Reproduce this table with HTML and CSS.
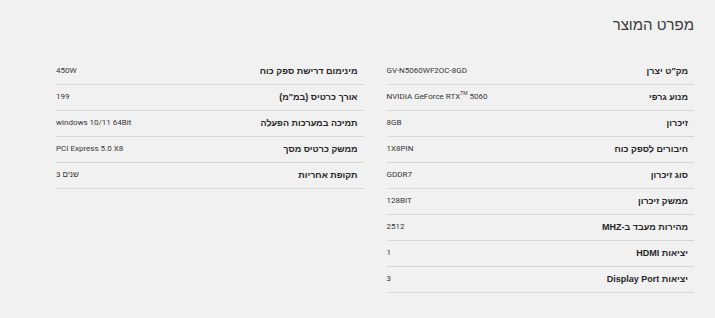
FILE: index.html
```html
<!DOCTYPE html>
<html lang="he" dir="rtl">
<head>
  <meta charset="UTF-8">
  <meta name="viewport" content="width=device-width, initial-scale=1.0">
  <title>מפרט המוצר</title>
  <link rel="stylesheet" href="styles.css">
</head>
<body>
  <section class="specs">
    <h2 class="specs-title">מפרט המוצר</h2>

    <div class="specs-grid">
      <ul class="spec-list">
        <li class="spec-row"><span class="spec-label">מק"ט יצרן</span><span class="spec-value">GV-N5060WF2OC-8GD</span></li>
        <li class="spec-row"><span class="spec-label">מנוע גרפי</span><span class="spec-value">NVIDIA GeForce RTX<sup>TM</sup> 5060</span></li>
        <li class="spec-row"><span class="spec-label">זיכרון</span><span class="spec-value">8GB</span></li>
        <li class="spec-row"><span class="spec-label">חיבורים לספק כוח</span><span class="spec-value">1X8PIN</span></li>
        <li class="spec-row"><span class="spec-label">סוג זיכרון</span><span class="spec-value">GDDR7</span></li>
        <li class="spec-row"><span class="spec-label">ממשק זיכרון</span><span class="spec-value">128BIT</span></li>
        <li class="spec-row"><span class="spec-label">מהירות מעבד ב-MHZ</span><span class="spec-value">2512</span></li>
        <li class="spec-row"><span class="spec-label">יציאות HDMI</span><span class="spec-value">1</span></li>
        <li class="spec-row"><span class="spec-label">יציאות Display Port</span><span class="spec-value">3</span></li>
      </ul>

      <ul class="spec-list">
        <li class="spec-row"><span class="spec-label">מינימום דרישת ספק כוח</span><span class="spec-value">450W</span></li>
        <li class="spec-row"><span class="spec-label">אורך כרטיס (במ"מ)</span><span class="spec-value">199</span></li>
        <li class="spec-row"><span class="spec-label">תמיכה במערכות הפעלה</span><span class="spec-value">windows 10/11 64Bit</span></li>
        <li class="spec-row"><span class="spec-label">ממשק כרטיס מסך</span><span class="spec-value">PCI Express 5.0 X8</span></li>
        <li class="spec-row"><span class="spec-label">תקופת אחריות</span><span class="spec-value">3 שנים</span></li>
      </ul>
    </div>
  </section>
</body>
</html>
```

FILE: styles.css
```css
body {
  margin: 0;
  background-color: #f1f1f1;
  font-family: "Liberation Sans", Arial, sans-serif;
  color: #333;
}

.specs {
  padding: 13px 21px 20px 56px;
}

.specs-title {
  margin: 0;
  font-size: 15px;
  font-weight: normal;
  line-height: 24px;
  color: #3a3a3a;
}

/* two columns of rows, the first one on the right */
.specs-grid {
  display: grid;
  grid-template-columns: 1fr 1fr;
  gap: 23px;
  margin-top: 22px;
  align-items: start;
}

.spec-list {
  list-style: none;
  margin: 0;
  padding: 0;
}

.spec-row {
  display: flex;
  justify-content: space-between;
  align-items: flex-start;
  height: 25px;
  border-bottom: 1px solid #d6d6d6;
  padding-right: 6px;
}

.spec-label {
  margin-top: 6px;
  font-size: 9px;
  font-weight: bold;
  line-height: 13px;
  color: #262626;
}

.spec-value {
  margin-top: 6px;
  direction: ltr;
  unicode-bidi: isolate;
  font-family: Roboto, "Liberation Sans", sans-serif;
  font-size: 8px;
  line-height: 11px;
  color: #363636;
}

.spec-value sup {
  font-size: 5px;
  line-height: 0;
}
```
